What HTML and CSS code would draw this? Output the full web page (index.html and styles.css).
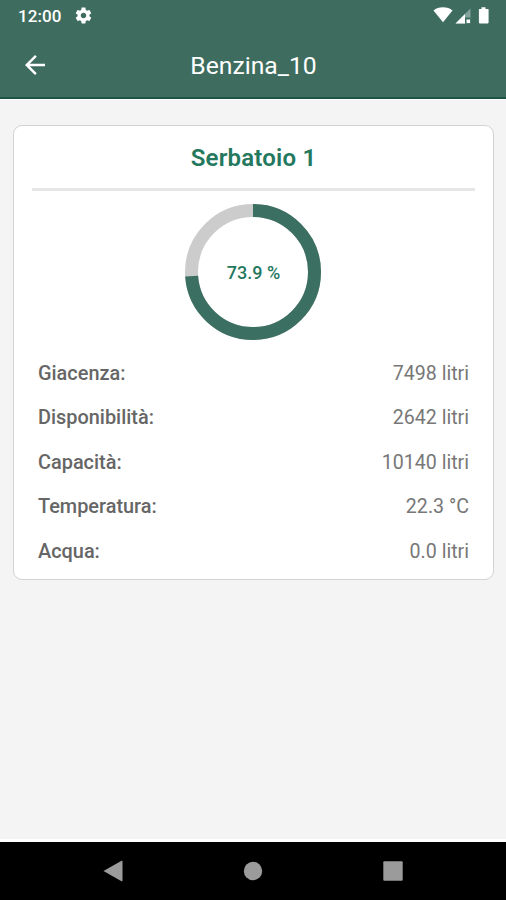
FILE: index.html
```html
<!DOCTYPE html>
<html lang="it">
<head>
  <meta charset="UTF-8">
  <meta name="viewport" content="width=device-width, initial-scale=1.0">
  <title>Benzina_10</title>
  <link rel="stylesheet" href="styles.css">
</head>
<body>
  <div class="status-bar">
    <span class="time">12:00</span>
    <svg class="gear" viewBox="0 0 24 24"><path d="M19.43 12.98c.04-.32.07-.64.07-.98s-.03-.66-.07-.98l2.11-1.65c.19-.15.24-.42.12-.64l-2-3.46c-.12-.22-.39-.3-.61-.22l-2.49 1c-.52-.4-1.08-.73-1.69-.98l-.38-2.65C14.46 2.18 14.25 2 14 2h-4c-.25 0-.46.18-.49.42l-.38 2.65c-.61.25-1.17.59-1.69.98l-2.49-1c-.23-.09-.49 0-.61.22l-2 3.46c-.13.22-.07.49.12.64l2.11 1.65c-.04.32-.07.65-.07.98s.03.66.07.98l-2.11 1.65c-.19.15-.24.42-.12.64l2 3.46c.12.22.39.3.61.22l2.49-1c.52.4 1.08.73 1.69.98l.38 2.65c.03.24.24.42.49.42h4c.25 0 .46-.18.49-.42l.38-2.65c.61-.25 1.17-.59 1.69-.98l2.49 1c.23.09.49 0 .61-.22l2-3.46c.12-.22.07-.49-.12-.64l-2.11-1.65zM12 15.500c-1.930 0-3.500-1.570-3.500-3.500s1.570-3.500 3.500-3.500 3.500 1.570 3.500 3.500-1.570 3.500-3.500 3.500z"/></svg>
    <svg class="signals" viewBox="0 0 60 18">
      <path d="M.5 3.500C3 1.500 6.200.3 10 .3s7 1.200 9.500 3.200L10 15.300z"/>
      <path class="dim" d="M37.500 1.500v15h-15z"/>
      <path d="M32 7v9.500h-9.500z"/>
      <path class="gap" d="M32 10.500h5.500v6H32z"/>
      <path d="M33.500 12.500H37v3.500h-3.500z"/>
      <path d="M46.500 2H48.500V.3h4V2H55q.6 0 .6.600v13q0 .8-.8.800h-8.100q-.8 0-.8-.8v-13q0-.6.600-.6z"/>
    </svg>
  </div>
  <header class="toolbar">
    <a class="back" href="#" aria-label="Indietro">
      <svg viewBox="0 0 24 24"><path d="M20 11H7.830l5.590-5.590L12 4l-8 8 8 8 1.410-1.410L7.830 13H20v-2z"/></svg>
    </a>
    <h1>Benzina_10</h1>
  </header>
  <main>
    <section class="card">
      <h2>Serbatoio 1</h2>
      <div class="gauge">
        <svg viewBox="0 0 136 136">
          <circle class="track" cx="68" cy="68" r="61.500"/>
          <circle class="level" cx="68" cy="68" r="61.500" pathLength="100" stroke-dasharray="73.900 26.100" transform="rotate(-90 68 68)"/>
        </svg>
        <span class="percent">73.9 %</span>
      </div>
      <dl>
        <div class="row"><dt>Giacenza:</dt><dd>7498 litri</dd></div>
        <div class="row"><dt>Disponibilità:</dt><dd>2642 litri</dd></div>
        <div class="row"><dt>Capacità:</dt><dd>10140 litri</dd></div>
        <div class="row"><dt>Temperatura:</dt><dd>22.3 °C</dd></div>
        <div class="row"><dt>Acqua:</dt><dd>0.0 litri</dd></div>
      </dl>
    </section>
  </main>
  <nav class="nav-bar">
    <svg viewBox="0 0 24 24"><path d="M2.500 12L20.500 1.800q1-.5 1 .6v19.200q0 1.100-1 .6z"/></svg>
    <svg viewBox="0 0 24 24"><circle cx="12" cy="12" r="9.200"/></svg>
    <svg viewBox="0 0 24 24"><rect x="2.300" y="2.300" width="19.400" height="19.400" rx="1"/></svg>
  </nav>
</body>
</html>
```
FILE: styles.css
```css
* { box-sizing: border-box; }
body {
  margin: 0; height: 100vh; display: flex; flex-direction: column;
  font-family: Roboto, sans-serif; background: #f4f4f4; color: #666;
}
h1, h2, dl, dt, dd { margin: 0; }
svg { display: block; }

.status-bar {
  height: 32px; padding: 0 14px 1px 18px; display: flex; align-items: center;
  background: #3e6d60; color: #fff; fill: #fff;
}
.time { font-size: 17px; font-weight: 500; letter-spacing: 0.1px; padding-top: 1px; }
.gear { width: 19px; height: 19px; margin-left: 12px; }
.signals { width: 60px; height: 18px; margin: 0 -1px 0 auto; }
.signals .dim { fill: #84a49b; }
.signals .gap { fill: #3e6d60; }

.toolbar {
  height: 67px; padding: 0 20px; display: grid; grid-template-columns: 30px 1fr 30px; align-items: center;
  background: #3e6d60; color: #fff; border-bottom: 2px solid #1a5544;
}
.back svg { width: 30px; height: 30px; fill: #fff; }
.toolbar h1 { padding: 1px 0 0 1px; font-size: 24.7px; font-weight: 400; text-align: center; }

main { flex: 1; padding: 25px 12px 0 13px; border-top: 1px solid #fff; border-bottom: 3px solid #fff; }
.card {
  height: 455px; padding: 0 18px; background: #fff;
  border: 1px solid #d3d3d3; border-radius: 9px;
}
.card h2 {
  height: 65px; line-height: 64px; font-size: 24px; font-weight: 600;
  letter-spacing: 0.2px; text-align: center; color: #24785e; border-bottom: 3px solid #e6e6e6;
}
.gauge { display: grid; place-items: center; margin-top: 13px; }
.gauge > * { grid-area: 1 / 1; }
.gauge svg { width: 136px; height: 136px; margin-left: -1px; }
.gauge circle { fill: none; stroke-width: 13px; }
.track { stroke: #ccc; }
.level { stroke: #3b6f61; }
.percent { font-size: 18px; font-weight: 500; color: #24785e; }

dl { padding: 11px 6px 0; }
.row { height: 44.5px; display: flex; justify-content: space-between; align-items: center; font-size: 19.9px; }
dt { font-weight: 500; }
dd { font-size: 19.6px; color: #777; }

.nav-bar {
  height: 58px; padding: 0 43px; display: flex; justify-content: space-around; align-items: center;
  background: #000; fill: #9b9b9b;
}
.nav-bar svg { width: 24px; height: 24px; }
```
